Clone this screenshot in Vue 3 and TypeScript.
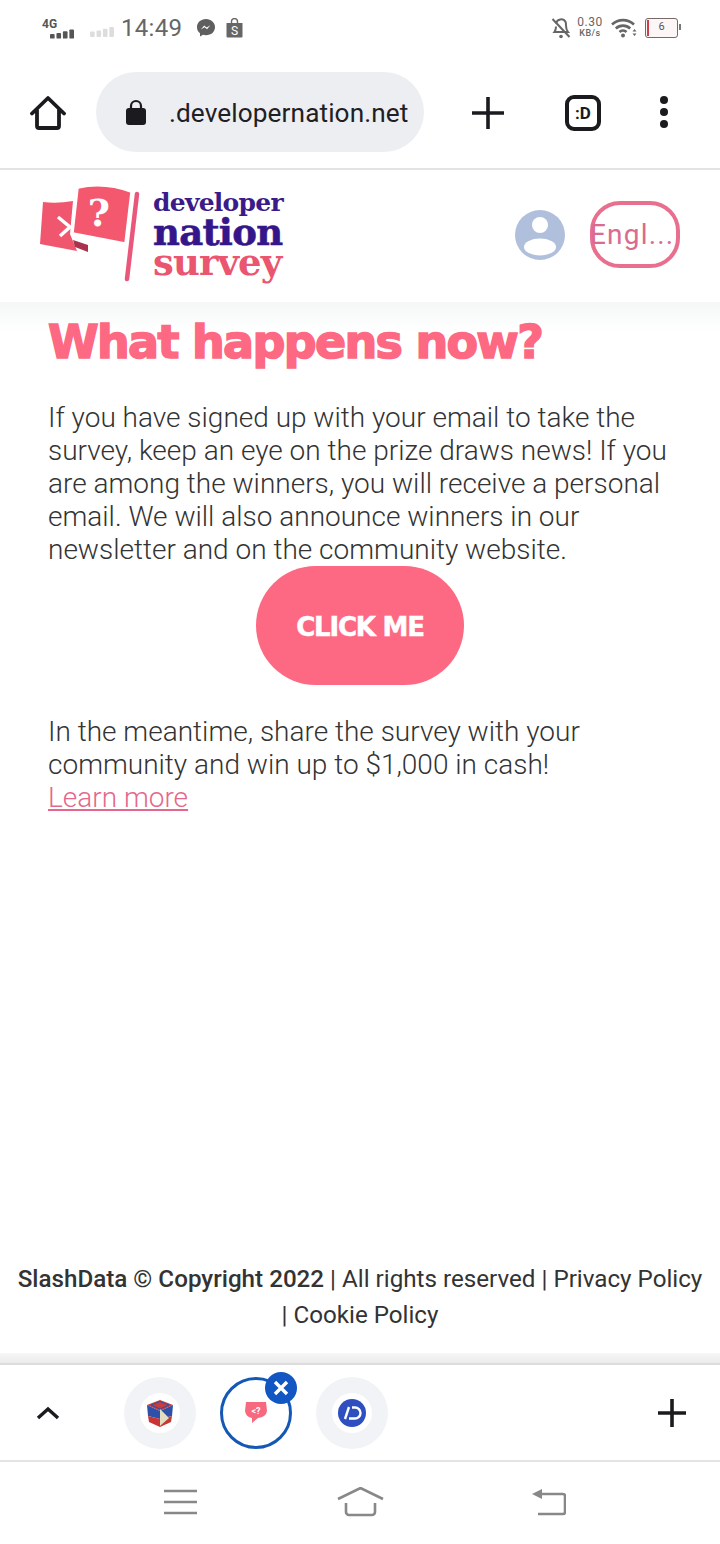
<script setup lang="ts">
const url = ".developernation.net";
const firstText =
  "If you have signed up with your email to take the survey, keep an eye on the prize draws news! If you are among the winners, you will receive a personal email. We will also announce winners in our newsletter and on the community website.";
const secondText = "In the meantime, share the survey with your community and win up to $1,000 in cash!";
</script>

<template>
  <div class="phone">
    <div class="status-bar">
      <div class="status-left">
        <div class="signal">
          <span class="net">4G</span>
          <svg width="24" height="10" viewBox="0 0 26 10">
            <rect x="0" y="5" width="5" height="5" rx="1" fill="#555" />
            <rect x="7" y="4" width="5" height="6" rx="1" fill="#555" />
            <rect x="14" y="2" width="5" height="8" rx="1" fill="#555" />
            <rect x="21" y="0" width="5" height="10" rx="1" fill="#555" />
          </svg>
        </div>
        <svg class="signal-off" width="24" height="11" viewBox="0 0 26 12">
          <rect x="0" y="6" width="5" height="6" rx="1" fill="#ddd" />
          <rect x="7" y="5" width="5" height="7" rx="1" fill="#ddd" />
          <rect x="14" y="3" width="5" height="9" rx="1" fill="#ddd" />
          <rect x="21" y="1" width="5" height="11" rx="1" fill="#ddd" />
        </svg>
        <span class="clock">14:49</span>
        <svg class="messenger" width="20" height="20" viewBox="0 0 20 20">
          <path d="M10 1C4.800 1 1 4.600 1 9.200c0 2.500 1.100 4.600 3 6v3.300l3-1.700c1 .3 2 .4 3 .4 5.200 0 9-3.600 9-8S15.200 1 10 1z" fill="#5f5f5f" />
          <path d="M4.800 11.600l3.400-4 2.400 2 3.800-2.400-3.400 4-2.400-2z" fill="#fff" />
        </svg>
        <svg class="shop" width="17" height="20" viewBox="0 0 17 20">
          <path d="M5.500 5V3.600a3 3 0 0 1 6 0V5" fill="none" stroke="#666" stroke-width="1.400" />
          <path d="M.5 5h16v13.500a1 1 0 0 1-1 1h-14a1 1 0 0 1-1-1z" fill="#666" />
          <text x="8.500" y="17" class="shop-s">S</text>
        </svg>
      </div>
      <div class="status-right">
        <svg class="bell" width="20" height="22" viewBox="0 0 20 22">
          <path d="M5 6.500a5.200 5.200 0 0 1 9.600-1.500c.4.900.4 2 .4 3.500 0 3 .8 5 2 6.500H3.400c1-1.300 1.600-3 1.600-5.500" fill="none" stroke="#666" stroke-width="2" />
          <path d="M1.500 2l17 18" stroke="#666" stroke-width="2" />
          <circle cx="10" cy="19.500" r="1.800" fill="#666" />
        </svg>
        <div class="speed"><span>0.30</span><span class="unit">KB/s</span></div>
        <svg width="26" height="20" viewBox="0 0 26 20">
          <path d="M1 6.500a16 16 0 0 1 22 0" fill="none" stroke="#666" stroke-width="2.600" />
          <path d="M4.800 10.500a10.500 10.500 0 0 1 14.400 0" fill="none" stroke="#666" stroke-width="2.600" />
          <path d="M8.500 14a5 5 0 0 1 7 0" fill="none" stroke="#666" stroke-width="2.600" />
          <circle cx="12" cy="17.500" r="2" fill="#666" />
          <path d="M23.500 11l2 2.500h-4zM23.500 18l2-2.500h-4z" fill="#666" />
        </svg>
        <div class="battery"><i class="level"></i><span>6</span></div>
      </div>
    </div>

    <div class="toolbar">
      <svg class="tool-home" width="36" height="36" viewBox="0 0 36 36">
        <path d="M2 18.500L18 3l16 15.500M7 15v16a2 2 0 0 0 2 2h18a2 2 0 0 0 2-2V15" fill="none" stroke="#1b1b1f" stroke-width="3.800" stroke-linecap="round" stroke-linejoin="round" />
      </svg>
      <div class="url-pill">
        <svg width="20" height="26" viewBox="0 0 20 26">
          <path d="M5 11V7a5 5 0 0 1 10 0v4" fill="none" stroke="#1b1b1f" stroke-width="2.200" />
          <rect x="0" y="9" width="20" height="17" rx="3" fill="#1b1b1f" />
        </svg>
        <span class="url">{{ url }}</span>
      </div>
      <svg class="tool-plus" width="32" height="32" viewBox="0 0 32 32">
        <path d="M0 16h32M16 0v32" stroke="#1b1b1f" stroke-width="3.600" stroke-linecap="round" />
      </svg>
      <div class="tab-count">:D</div>
      <div class="kebab"><i></i><i></i><i></i></div>
    </div>

    <header class="site-header">
      <div class="logo">
        <svg class="flag" width="100" height="100" viewBox="0 0 100 100">
          <path d="M3 18q14 2 30-1l-3 33 7 17-37-7z" fill="#f0566e" />
          <path d="M38 4q26-6 53 4l-6 51-52-10z" fill="#f4586f" stroke="#fff" stroke-width="1.500" />
          <path d="M33 56l15 5v7l-13-5z" fill="#a9324f" />
          <path d="M97 10l-10 85" stroke="#e9587a" stroke-width="4.500" stroke-linecap="round" />
          <path d="M18 33l12 10-10 9" fill="none" stroke="#fff" stroke-width="3.500" />
          <text x="59" y="42" class="flag-mark">?</text>
        </svg>
        <div class="wordmark">
          <span class="word developer">developer</span>
          <span class="word nation">nation</span>
          <span class="word survey">survey</span>
        </div>
      </div>
      <div class="header-actions">
        <svg width="50" height="50" viewBox="0 0 50 50">
          <circle cx="25" cy="25" r="25" fill="#b0c0dc" />
          <circle cx="25" cy="15" r="8" fill="#fff" />
          <ellipse cx="25" cy="37" rx="16" ry="8.500" fill="#fff" />
        </svg>
        <div class="lang">Engl...</div>
      </div>
    </header>

    <main class="content">
      <h1 class="title">What happens now?</h1>
      <p class="copy">{{ firstText }}</p>
      <button class="cta" type="button">CLICK ME</button>
      <p class="copy second">
        {{ secondText }}<br />
        <a href="#" class="more">Learn more</a>
      </p>
    </main>

    <footer class="site-footer">
      <strong>SlashData © Copyright 2022</strong> | All rights reserved | Privacy Policy | Cookie Policy
    </footer>

    <div class="tab-strip">
      <svg class="chevron" width="24" height="14" viewBox="0 0 24 14">
        <path d="M2 12l10-9 10 9" fill="none" stroke="#1b1b1f" stroke-width="3.400" />
      </svg>
      <div class="tab-list">
        <div class="tab">
          <div class="favicon">
            <svg width="28" height="28" viewBox="0 0 28 28">
              <path d="M1 6l13-5 13 5-13 6z" fill="#c93c3c" />
              <path d="M5 6l9-3.500 9 3.500-9 4z" fill="none" stroke="#2f50a8" stroke-width="1" />
              <path d="M1 6l13 6v8L2 17z" fill="#2f50a8" />
              <path d="M27 6l-13 6v8l12-3z" fill="#2f50a8" />
              <path d="M2 17l12 3v8L3 23z" fill="#c93535" />
              <path d="M26 17l-12 3v8l11-5z" fill="#c23a35" />
              <path d="M14 10l9 9-9 8z" fill="#e2dcc0" />
            </svg>
          </div>
        </div>
        <div class="tab active">
          <svg width="22" height="23" viewBox="0 0 22 23">
            <path d="M1 1h20l1 9q-1 6-9 7l-6 5v-5q-6-1-7-7z" fill="#f6697f" />
            <text x="11" y="12.500" class="tab-mark">&lt;?</text>
          </svg>
          <div class="close">
            <svg width="16" height="16" viewBox="0 0 16 16">
              <path d="M2 2l12 12M14 2L2 14" stroke="#fff" stroke-width="3.400" />
            </svg>
          </div>
        </div>
        <div class="tab">
          <div class="favicon">
            <svg width="28" height="28" viewBox="0 0 28 28">
              <circle cx="14" cy="14" r="14" fill="#2d4fbf" />
              <path d="M11 8l-4 12M14 8.500h3a5.500 5.500 0 0 1 0 11h-6" fill="none" stroke="#fff" stroke-width="2.400" />
            </svg>
          </div>
        </div>
      </div>
      <svg class="strip-plus" width="28" height="28" viewBox="0 0 28 28">
        <path d="M0 14h28M14 0v28" stroke="#1b1b1f" stroke-width="3.600" />
      </svg>
    </div>

    <nav class="nav-bar">
      <svg width="33" height="26" viewBox="0 0 33 26">
        <path d="M0 2h33M0 13h33M0 24h33" stroke="#888" stroke-width="2.600" />
      </svg>
      <svg width="47" height="30" viewBox="0 0 47 30">
        <path d="M1 12L23.500 1 46 12M9 16v9a3 3 0 0 0 3 3h23a3 3 0 0 0 3-3v-9" fill="none" stroke="#888" stroke-width="2.600" />
      </svg>
      <svg width="34" height="28" viewBox="0 0 34 28">
        <path d="M0 6l10-5v10z" fill="#888" />
        <path d="M6 6h25a2 2 0 0 1 2 2v16a2 2 0 0 1-2 2H6" fill="none" stroke="#888" stroke-width="2.600" />
      </svg>
    </nav>
  </div>
</template>

<style scoped>
.phone {
  width: 720px;
  height: 1544px;
  display: flex;
  flex-direction: column;
  background: #fff;
  font-family: Roboto, "Liberation Sans", sans-serif;
  overflow: hidden;
}

.status-bar {
  height: 56px;
  display: flex;
  justify-content: space-between;
  align-items: center;
  padding: 0 42px;
  color: #666;
}

.status-left,
.status-right {
  display: flex;
  align-items: center;
}

.signal {
  width: 32px;
  display: flex;
  flex-direction: column;
  margin-right: 16px;
}

.signal svg {
  margin-left: 8px;
  margin-top: -2px;
}

.net {
  font-size: 12px;
  line-height: 13px;
  font-weight: 700;
  color: #555;
}

.signal-off {
  margin: 6px 7px 0 0;
}

.clock {
  font-size: 24px;
  letter-spacing: 0.3px;
  color: #666;
}

.messenger {
  margin-left: 14px;
}

.shop {
  margin-left: 10px;
}

.shop-s {
  font-size: 12px;
  fill: #fff;
  text-anchor: middle;
}

.bell {
  margin-right: 6px;
}

.speed {
  display: flex;
  flex-direction: column;
  align-items: center;
  font-size: 12px;
  line-height: 11px;
  letter-spacing: 0.5px;
  margin-right: 8px;
  width: 26px;
}

.unit {
  font-size: 9px;
  font-weight: 500;
}

.battery {
  position: relative;
  width: 31px;
  height: 18px;
  margin-left: 8px;
  border: 1.500px solid #77686a;
  border-radius: 3px;
  font-size: 11px;
  line-height: 16px;
  text-align: center;
  color: #555;
  background: #fdf6f6;
}

.battery::after {
  content: "";
  position: absolute;
  right: -4px;
  top: 5px;
  width: 2px;
  height: 6px;
  background: #777;
}

.level {
  position: absolute;
  left: 1px;
  top: 1px;
  bottom: 1px;
  width: 2px;
  background: #c8404a;
}

.toolbar {
  height: 114px;
  display: flex;
  align-items: flex-start;
  padding-top: 16px;
  box-sizing: border-box;
  border-bottom: 2px solid #e2e3e5;
}

.tool-home {
  margin: 23px 0 0 30px;
}

.url-pill {
  width: 328px;
  height: 80px;
  margin-left: 30px;
  box-sizing: border-box;
  border-radius: 40px;
  background: #eceef2;
  display: flex;
  align-items: center;
  padding-left: 30px;
  color: #1f2024;
}

.url {
  margin: 2px 0 0 23px;
  font-size: 26.200px;
  letter-spacing: 0.1px;
  white-space: nowrap;
}

.url-pill svg {
  flex-shrink: 0;
}

.tool-plus {
  margin: 25px 0 0 48px;
}

.tab-count {
  width: 36px;
  height: 36px;
  margin: 23px 0 0 61px;
  box-sizing: border-box;
  border: 4px solid #1b1b1f;
  border-radius: 9px;
  font-size: 17px;
  line-height: 28px;
  font-weight: 700;
  text-align: center;
  color: #1b1b1f;
}

.kebab {
  display: flex;
  flex-direction: column;
  gap: 4px;
  margin: 24px 0 0 59px;
}

.kebab i {
  width: 8px;
  height: 8px;
  border-radius: 50%;
  background: #1b1b1f;
}

.site-header {
  height: 132px;
  display: flex;
  justify-content: space-between;
  padding: 14px 40px 0 40px;
  box-sizing: border-box;
}

.logo {
  display: flex;
  align-items: flex-start;
  gap: 14px;
}

.wordmark {
  display: flex;
  flex-direction: column;
  font-family: "DejaVu Serif", "Liberation Serif", serif;
  font-weight: 700;
  margin-top: 4px;
}

.word {
  display: block;
  white-space: nowrap;
}

.developer {
  font-size: 25px;
  line-height: 30px;
  letter-spacing: -0.75px;
  margin-left: -1px;
  color: #3b1b8a;
}

.nation {
  font-size: 37px;
  line-height: 29px;
  letter-spacing: -0.7px;
  margin-left: -1px;
  color: #35168a;
  -webkit-text-stroke: 0.6px #35168a;
}

.survey {
  font-size: 37px;
  line-height: 31px;
  letter-spacing: -0.9px;
  margin-left: -1px;
  color: #ea5570;
}

.flag-mark {
  font-family: "DejaVu Serif", serif;
  font-weight: 700;
  font-size: 38px;
  fill: #fff;
  text-anchor: middle;
}

.header-actions {
  display: flex;
  align-items: flex-start;
  gap: 25px;
  padding-top: 26px;
}

.lang {
  width: 90px;
  height: 67px;
  margin-top: -9px;
  box-sizing: border-box;
  border: 4px solid #e96f8e;
  border-radius: 30px;
  font-size: 28px;
  line-height: 60px;
  color: #d96c8e;
  white-space: nowrap;
  text-indent: -4px;
  letter-spacing: 1.200px;
}

.content {
  flex: 1;
  padding: 0 48px;
  background: linear-gradient(#f5f7f7, #fff) top / 100% 30px no-repeat;
}

.title {
  margin: 14px 0 0;
  font-family: "DejaVu Sans", Lato, sans-serif;
  font-size: 46px;
  line-height: 52px;
  font-weight: 700;
  letter-spacing: -1.700px;
  color: #fd6982;
  -webkit-text-stroke: 1.600px #fd6982;
  white-space: nowrap;
}

.copy {
  margin: 33px 0 0;
  font-size: 28px;
  line-height: 33px;
  font-weight: 300;
  color: #333;
}

.cta {
  display: block;
  width: 208px;
  height: 119px;
  margin: 0 auto;
  border: none;
  border-radius: 60px;
  background: #fd6982;
  color: #fff;
  font-family: "DejaVu Sans", Lato, sans-serif;
  font-size: 26px;
  font-weight: 700;
  letter-spacing: -1.200px;
  -webkit-text-stroke: 0.500px #fff;
  padding: 3px 0 0;
}

.second {
  margin-top: 30px;
}

.more {
  color: #e4688c;
}

.site-footer {
  padding: 0 14px 30px;
  font-size: 24.200px;
  line-height: 36px;
  text-align: center;
  color: #333;
}

.site-footer strong {
  font-weight: 500;
}

.tab-strip {
  position: relative;
  height: 99px;
  box-sizing: border-box;
  display: flex;
  align-items: center;
  border-top: 2px solid #dcdcdc;
  border-bottom: 2px solid #e4e4e4;
}

.tab-strip::before {
  content: "";
  position: absolute;
  left: 0;
  right: 0;
  top: -12px;
  height: 10px;
  background: linear-gradient(#f6f6f6, #ebebeb);
}

.chevron {
  margin-left: 36px;
}

.tab-list {
  display: flex;
  gap: 24px;
  margin-left: 64px;
}

.tab {
  position: relative;
  width: 72px;
  height: 72px;
  box-sizing: border-box;
  border-radius: 50%;
  background: #f2f3f6;
  display: flex;
  align-items: center;
  justify-content: center;
}

.tab.active {
  background: #fff;
  border: 3.500px solid #1557b5;
}

.favicon {
  width: 40px;
  height: 40px;
  border-radius: 50%;
  background: #fff;
  display: flex;
  align-items: center;
  justify-content: center;
}

.close {
  position: absolute;
  top: -7.500px;
  right: -7.500px;
  width: 32px;
  height: 32px;
  border-radius: 50%;
  background: #1256c4;
  display: flex;
  align-items: center;
  justify-content: center;
}

.tab-mark {
  font-size: 9px;
  font-weight: 700;
  fill: #fff;
  text-anchor: middle;
}

.strip-plus {
  margin-left: auto;
  margin-right: 34px;
}

.nav-bar {
  height: 82px;
  display: flex;
  align-items: center;
  padding: 0 0 2px 164px;
  box-sizing: border-box;
}

.nav-bar svg:nth-child(2) {
  margin-left: 140px;
}

.nav-bar svg:nth-child(3) {
  margin-left: 148px;
}
</style>
